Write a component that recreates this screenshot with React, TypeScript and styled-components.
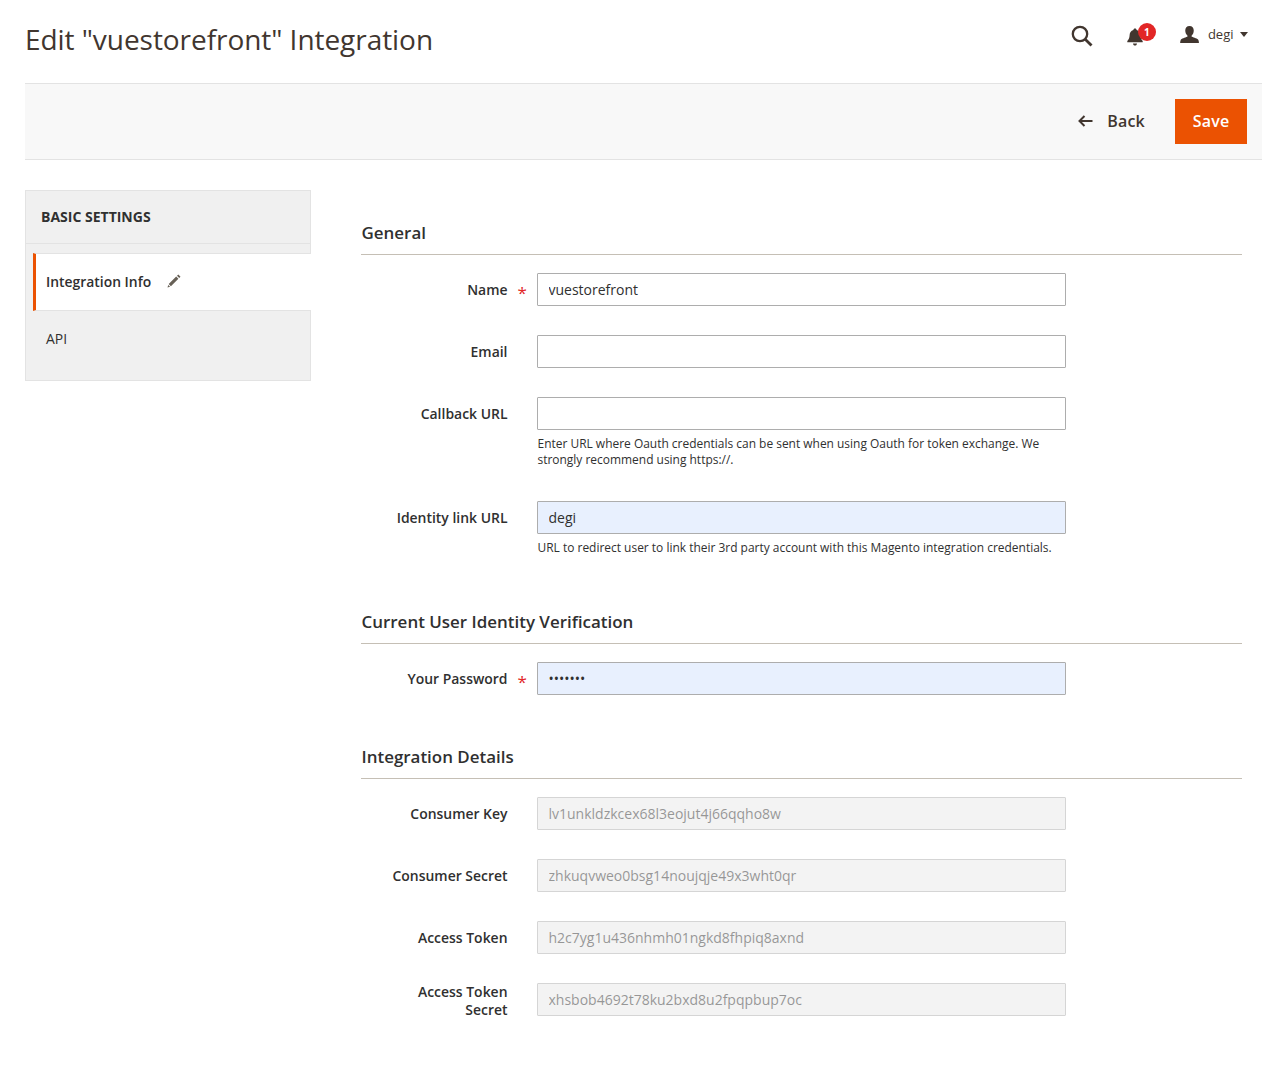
import styled, { createGlobalStyle } from "styled-components";

const GENERAL_FIELDS = [
  { label: "Name", value: "vuestorefront", required: true },
  { label: "Email", value: "" },
  {
    label: "Callback URL",
    value: "",
    note: "Enter URL where Oauth credentials can be sent when using Oauth for token exchange. We strongly recommend using https://.",
  },
  {
    label: "Identity link URL",
    value: "degi",
    filled: true,
    note: "URL to redirect user to link their 3rd party account with this Magento integration credentials.",
  },
];

const DETAIL_FIELDS = [
  { label: "Consumer Key", value: "lv1unkldzkcex68l3eojut4j66qqho8w" },
  { label: "Consumer Secret", value: "zhkuqvweo0bsg14noujqje49x3wht0qr" },
  { label: "Access Token", value: "h2c7yg1u436nhmh01ngkd8fhpiq8axnd" },
  { label: "Access Token Secret", value: "xhsbob4692t78ku2bxd8u2fpqpbup7oc", wrapped: true },
];

type FieldProps = {
  label: string;
  value: string;
  required?: boolean;
  filled?: boolean;
  disabled?: boolean;
  password?: boolean;
  wrapped?: boolean;
  note?: string;
};

function Field({ label, value, required, filled, disabled, password, wrapped, note }: FieldProps) {
  return (
    <Row>
      <Label $wrapped={wrapped}>{label}</Label>
      <Star>{required ? "*" : ""}</Star>
      <Control>
        <Input
          readOnly
          type={password ? "password" : "text"}
          value={value}
          disabled={disabled}
          $filled={filled}
        />
        {note && <Note>{note}</Note>}
      </Control>
    </Row>
  );
}

export default function App() {
  return (
    <>
      <GlobalStyle />
      <Page>
        <Header>
          <Title>Edit "vuestorefront" Integration</Title>
          <HeaderTools>
            <ToolIcon>
              <svg width="22" height="22" viewBox="0 0 22 22" fill="none" stroke="#41362f">
                <circle cx="9" cy="9" r="7.2" strokeWidth="2.3" />
                <path d="M14.2 14.2 L20.5 20.5" strokeWidth="2.8" />
              </svg>
            </ToolIcon>
            <BellWrap>
              <svg width="16" height="18" viewBox="0 0 16 18" fill="#41362f">
                <path d="M8 0.5c1 0 1.6.7 1.6 1.5 2.6.7 3.7 2.8 3.8 5.3.1 2.6.8 4.1 2.3 5.6v1.4H.3v-1.4c1.5-1.5 2.2-3 2.3-5.6C2.7 4.800 3.800 2.700 6.400 2c0-.8.600-1.500 1.600-1.500z" />
                <path d="M6 15.400h4c0 1.200-.9 2.100-2 2.100s-2-.9-2-2.100z" />
              </svg>
              <Badge>1</Badge>
            </BellWrap>
            <UserBox>
              <svg width="19" height="17" viewBox="0 0 20 18" fill="#41362f">
                <path d="M10 0c2.900 0 4.500 2 4.500 4.800 0 2.200-.9 4.200-2.100 5.300-.4.400-.3 1 .2 1.300 2.100 1 6.100 1.700 6.900 3.700.3.900.5 1.900.5 2.900H.1c0-1 .2-2 .5-2.900.8-2 4.800-2.700 6.900-3.700.5-.3.600-.9.200-1.300C6.500 9 5.500 7 5.500 4.800 5.500 2 7.100 0 10 0z" />
              </svg>
              <UserName>degi</UserName>
              <Caret />
            </UserBox>
          </HeaderTools>
        </Header>

        <ActionsBar>
          <BackButton>
            <svg width="15" height="12" viewBox="0 0 15 12" fill="none" stroke="#41362f" strokeWidth="2">
              <path d="M14.500 6H1.500M6.500 1 L1.500 6 L6.500 11" />
            </svg>
            Back
          </BackButton>
          <SaveButton>Save</SaveButton>
        </ActionsBar>

        <Columns>
          <Sidebar>
            <SidebarTitle>BASIC SETTINGS</SidebarTitle>
            <TabList>
              <Tab $active>
                Integration Info
                <svg width="14" height="14" viewBox="0 0 14 14" fill="#676056">
                  <path d="M11.300 .5l2.200 2.200-1.300 1.300-2.200-2.200zM9.200 2.600l2.200 2.200-7.500 7.500-2.200-2.200zM1.200 10.900l1.900 1.900-2.600.7z" />
                </svg>
              </Tab>
              <Tab>API</Tab>
            </TabList>
          </Sidebar>

          <Main>
            <Section>
              <SectionTitle>General</SectionTitle>
              {GENERAL_FIELDS.map((field) => (
                <Field key={field.label} {...field} />
              ))}
            </Section>
            <Section>
              <SectionTitle>Current User Identity Verification</SectionTitle>
              <Field label="Your Password" value="1234567" required filled password />
            </Section>
            <Section>
              <SectionTitle>Integration Details</SectionTitle>
              {DETAIL_FIELDS.map((field) => (
                <Field key={field.label} {...field} disabled />
              ))}
            </Section>
          </Main>
        </Columns>
      </Page>
    </>
  );
}

const GlobalStyle = createGlobalStyle`
  html, body {
    margin: 0;
    padding: 0;
    background: #fff;
  }
  body {
    font-family: "Open Sans", sans-serif;
    color: #41362f;
  }
  * {
    box-sizing: border-box;
  }
`;

const Page = styled.div`
  width: 1264px;
  height: 1082px;
  overflow: hidden;
  padding: 0 2px 0 25px;
`;

const Header = styled.header`
  height: 83px;
  display: flex;
  justify-content: space-between;
`;

const Title = styled.h1`
  margin: 18px 0 0;
  font-size: 28px;
  font-weight: 400;
  letter-spacing: -0.05px;
  line-height: 42px;
  color: #41362f;
`;

const HeaderTools = styled.div`
  display: flex;
  align-items: flex-start;
  padding-top: 25px;
`;

const ToolIcon = styled.div`
  width: 22px;
  height: 22px;
  margin-right: 34px;
`;

const BellWrap = styled.div`
  position: relative;
  width: 16px;
  height: 18px;
  margin: 3px 37px 0 0;
`;

const Badge = styled.span`
  position: absolute;
  top: -5px;
  left: 11px;
  width: 18px;
  height: 18px;
  border-radius: 50%;
  background: #e22626;
  color: #fff;
  font-size: 10px;
  font-weight: 700;
  line-height: 18px;
  text-align: center;
`;

const UserBox = styled.div`
  display: flex;
  align-items: center;
  height: 18px;
  margin-right: 14px;
`;

const UserName = styled.span`
  margin-left: 9px;
  font-size: 13px;
  color: #41362f;
`;

const Caret = styled.span`
  width: 0;
  height: 0;
  margin-left: 6.5px;
  border-style: solid;
  border-width: 5px 4px 0;
  border-color: #41362f transparent transparent;
`;

const ActionsBar = styled.div`
  height: 77px;
  display: flex;
  align-items: center;
  justify-content: flex-end;
  padding-right: 15px;
  background: #f8f8f8;
  border-top: 1px solid #e3e3e3;
  border-bottom: 1px solid #e3e3e3;
`;

const BackButton = styled.div`
  display: flex;
  align-items: center;
  gap: 14px;
  margin: -2px 30px 0 0;
  font-size: 16px;
  font-weight: 600;
  letter-spacing: 0.2px;
  color: #41362f;
`;

const SaveButton = styled.div`
  width: 72px;
  height: 45px;
  background: #eb5202;
  color: #fff;
  font-size: 16px;
  font-weight: 600;
  letter-spacing: 0.2px;
  line-height: 45px;
  text-align: center;
`;

const Columns = styled.div`
  display: flex;
  align-items: flex-start;
  padding-top: 30px;
`;

const Sidebar = styled.aside`
  width: 286px;
  flex: none;
  background: #f0f0f0;
  border: 1px solid #e3e3e3;
`;

const SidebarTitle = styled.div`
  height: 53px;
  padding-left: 15px;
  border-bottom: 1px solid #e3e3e3;
  font-size: 14px;
  font-weight: 700;
  line-height: 52px;
  color: #303030;
`;

const TabList = styled.div`
  padding: 9px 0 0 7px;
`;

const Tab = styled.div<{ $active?: boolean }>`
  display: flex;
  align-items: center;
  gap: 15.5px;
  height: ${(p) => (p.$active ? "58px" : "69px")};
  padding: ${(p) => (p.$active ? "0 0 2px 10px" : "0 0 14px 13px")};
  font-size: 13.9px;
  font-weight: ${(p) => (p.$active ? 600 : 400)};
  color: #303030;
  background: ${(p) => (p.$active ? "#fff" : "transparent")};
  border-left: ${(p) => (p.$active ? "3px solid #eb5202" : "none")};
  border-top: ${(p) => (p.$active ? "1px solid #e3e3e3" : "none")};
  border-bottom: ${(p) => (p.$active ? "1px solid #e3e3e3" : "none")};
  margin-right: ${(p) => (p.$active ? "-1px" : "0")};
`;

const Main = styled.main`
  flex: 1;
  margin-left: 50px;
  padding: 30px 20px 0 0;
`;

const Section = styled.section`
  padding-bottom: 20px;
`;

const SectionTitle = styled.h2`
  margin: 0 0 18px;
  padding: 0 0 8px 0.5px;
  border-bottom: 1px solid #c5bfb5;
  font-size: 16.95px;
  font-weight: 600;
  line-height: 26px;
  color: #303030;
`;

const Row = styled.div`
  display: grid;
  grid-template-columns: 146.5px 29.5px 529px;
  margin-bottom: 29px;
`;

const Label = styled.div<{ $wrapped?: boolean }>`
  padding: ${(p) => (p.$wrapped ? "0" : "8px")} 0 0 20px;
  font-size: 13.95px;
  font-weight: 600;
  line-height: 18px;
  text-align: right;
  color: #303030;
`;

const Star = styled.div`
  padding: 11px 0 0 10px;
  font-size: 17px;
  line-height: 18px;
  color: #e22626;
`;

const Control = styled.div`
  min-width: 0;
`;

const Input = styled.input<{ $filled?: boolean }>`
  display: block;
  width: 529px;
  height: 33px;
  padding: 0 10px 0 10.5px;
  border: 1px solid #adadad;
  border-radius: 1px;
  background: ${(p) => (p.$filled ? "#e8f0fe" : "#fff")};
  font-family: "Open Sans", sans-serif;
  font-size: 14px;
  color: #303030;
  outline: none;

  &:disabled {
    background: #e9e9e9;
    opacity: 0.5;
    color: #303030;
  }
`;

const Note = styled.div`
  margin: 6px 0 0 0.5px;
  padding-bottom: 4px;
  font-size: 11.96px;
  line-height: 16px;
  color: #303030;
`;
